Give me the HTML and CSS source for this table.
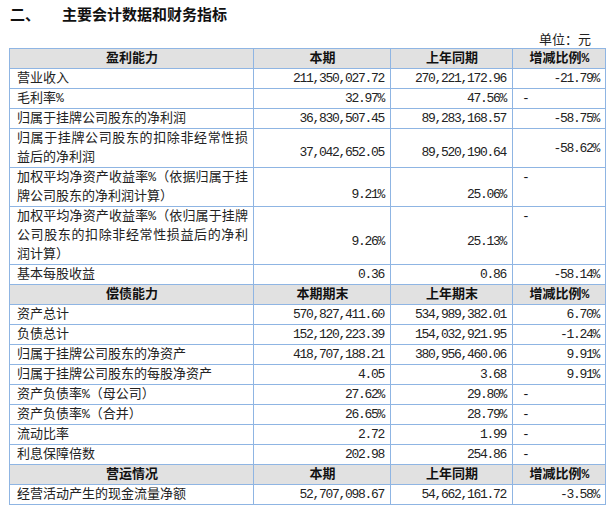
FILE: index.html
```html
<!DOCTYPE html>
<html lang="zh-CN">
<head>
<meta charset="utf-8">
<title>主要会计数据和财务指标</title>
<link rel="stylesheet" href="styles.css">
</head>
<body>
<div class="page">
  <div class="title"><span class="title-no">二、</span><span>主要会计数据和财务指标</span></div>
  <div class="unit">单位：元</div>
  <table class="fin">
    <colgroup>
      <col class="c1"><col class="c2"><col class="c3"><col class="c4">
    </colgroup>
    <tr class="hd"><th>盈利能力</th><th>本期</th><th>上年同期</th><th>增减比例%</th></tr>
    <tr><td class="lb">营业收入</td><td class="n">211,350,027.72</td><td class="n">270,221,172.96</td><td class="n">-21.79%</td></tr>
    <tr><td class="lb">毛利率%</td><td class="n">32.97%</td><td class="n">47.56%</td><td class="d">-</td></tr>
    <tr><td class="lb">归属于挂牌公司股东的净利润</td><td class="n">36,830,507.45</td><td class="n">89,283,168.57</td><td class="n">-58.75%</td></tr>
    <tr><td class="lb">归属于挂牌公司股东的扣除非经常性损益后的净利润</td><td class="n s4">37,042,652.05</td><td class="n s4">89,520,190.64</td><td class="n">-58.62%</td></tr>
    <tr><td class="lb">加权平均净资产收益率%（依据归属于挂牌公司股东的净利润计算）</td><td class="n s7">9.21%</td><td class="n s7">25.06%</td><td class="d top">-</td></tr>
    <tr><td class="lb">加权平均净资产收益率%（依归属于挂牌公司股东的扣除非经常性损益后的净利润计算）</td><td class="n s6">9.26%</td><td class="n s6">25.13%</td><td class="d top">-</td></tr>
    <tr><td class="lb">基本每股收益</td><td class="n">0.36</td><td class="n">0.86</td><td class="n">-58.14%</td></tr>
    <tr class="hd"><th>偿债能力</th><th>本期期末</th><th>上年期末</th><th>增减比例%</th></tr>
    <tr><td class="lb">资产总计</td><td class="n">570,827,411.60</td><td class="n">534,989,382.01</td><td class="n">6.70%</td></tr>
    <tr><td class="lb">负债总计</td><td class="n">152,120,223.39</td><td class="n">154,032,921.95</td><td class="n">-1.24%</td></tr>
    <tr><td class="lb">归属于挂牌公司股东的净资产</td><td class="n">418,707,188.21</td><td class="n">380,956,460.06</td><td class="n">9.91%</td></tr>
    <tr><td class="lb">归属于挂牌公司股东的每股净资产</td><td class="n">4.05</td><td class="n">3.68</td><td class="n">9.91%</td></tr>
    <tr><td class="lb">资产负债率%（母公司）</td><td class="n">27.62%</td><td class="n">29.80%</td><td class="d">-</td></tr>
    <tr><td class="lb">资产负债率%（合并）</td><td class="n">26.65%</td><td class="n">28.79%</td><td class="d">-</td></tr>
    <tr><td class="lb">流动比率</td><td class="n">2.72</td><td class="n">1.99</td><td class="d">-</td></tr>
    <tr><td class="lb">利息保障倍数</td><td class="n">202.98</td><td class="n">254.86</td><td class="d">-</td></tr>
    <tr class="hd"><th>营运情况</th><th>本期</th><th>上年同期</th><th>增减比例%</th></tr>
    <tr><td class="lb">经营活动产生的现金流量净额</td><td class="n">52,707,098.67</td><td class="n">54,662,161.72</td><td class="n">-3.58%</td></tr>
  </table>
</div>
</body>
</html>
```

FILE: styles.css
```css
html, body {
  margin: 0;
  padding: 0;
  background: #ffffff;
}

.page {
  width: 596px;
  padding: 0 0 0 9px;
  font-family: "Liberation Mono", "Noto Sans CJK SC", monospace;
  color: #111;
}

.title {
  display: flex;
  gap: 22px;
  padding: 4px 0 0 1px;
  line-height: 20px;
  font-family: "Noto Sans CJK SC", sans-serif;
  font-weight: bold;
  font-size: 15px;
}

.unit {
  margin-top: 7px;
  line-height: 16px;
  text-align: right;
  padding-right: 14px;
  font-family: "Noto Sans CJK SC", sans-serif;
  font-size: 13px;
  color: #222;
}

.fin {
  margin-top: 1px;
  width: 596px;
  border-collapse: collapse;
  table-layout: fixed;
  font-size: 13px;
}

.c1 { width: 244px; }
.c2 { width: 137px; }
.c3 { width: 122px; }
.c4 { width: 93px; }

.fin th,
.fin td {
  border: 1px solid #8fb5e3;
  padding: 0 6px 0 7px;
  line-height: 19px;
  height: 19px;
  vertical-align: middle;
}

.fin th {
  background: #e1e1e1;
  font-family: "Liberation Mono", "Noto Sans CJK SC", sans-serif;
  font-weight: bold;
  text-align: center;
}

.fin .lb {
  padding-right: 5px;
  text-align: justify;
  text-align-last: left;
  color: #222;
}

.fin .n {
  text-align: right;
  letter-spacing: -1.3px;
  color: #222;
}

.fin .d {
  padding-left: 9px;
  text-align: left;
}

.fin .top {
  vertical-align: top;
}

.fin .s4 { padding-top: 8px; }
.fin .s7 { padding-top: 14px; }
.fin .s6 { padding-top: 12px; }
```
